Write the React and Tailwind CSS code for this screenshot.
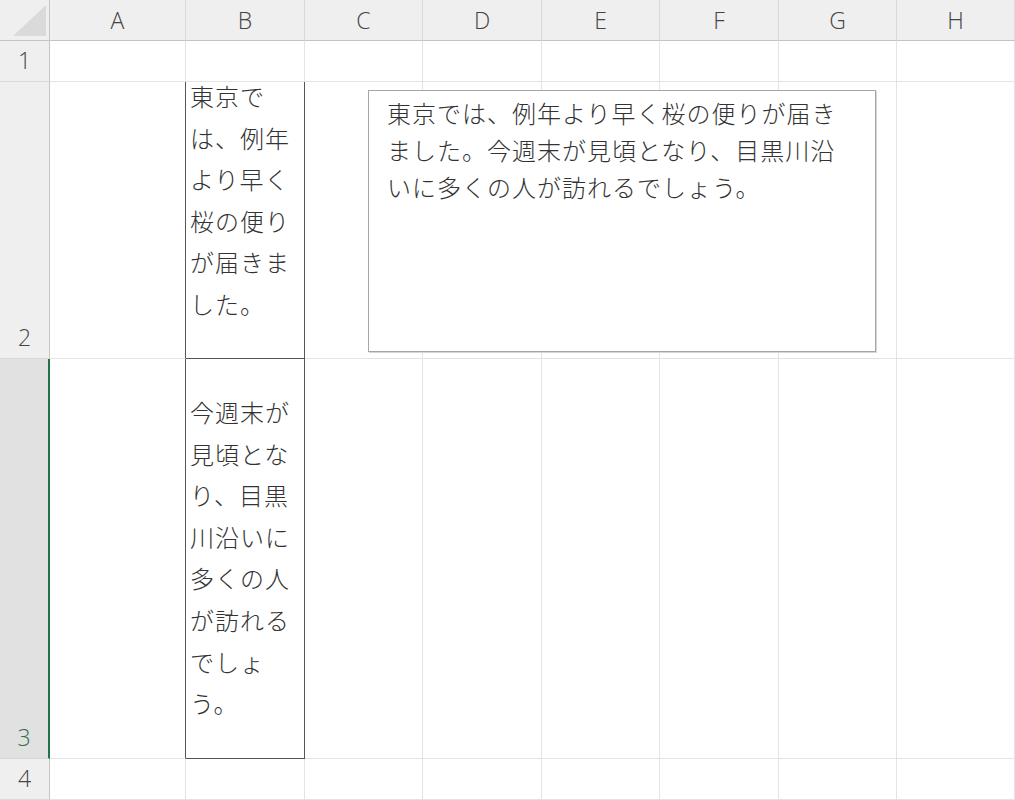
import React from "react";

const cols = ["A", "B", "C", "D", "E", "F", "G", "H"];
const jp = { fontFamily: '"Noto Sans CJK JP", "Noto Sans", sans-serif' };
const head = { fontFamily: '"Open Sans", "Liberation Sans", sans-serif' };

const b2 = ["東京で", "は、例年", "より早く", "桜の便り", "が届きま", "した。"];
const b3 = ["今週末が", "見頃とな", "り、目黒", "川沿いに", "多くの人", "が訪れる", "でしょ", "う。"];
const box = [
    "東京では、例年より早く桜の便りが届き",
    "ました。今週末が見頃となり、目黒川沿",
    "いに多くの人が訪れるでしょう。",
];

const RowHead = ({ n, selected }) => (
    <div
        className={
            "flex items-end justify-center border-b font-light " +
            (selected
                ? "bg-[#e1e1e1] border-r-2 border-r-[#217346] border-b-[#d4d4d4] text-[#2f6f4c]"
                : "bg-[#efefef] border-r border-r-[#c4c4c4] border-b-[#d9d9d9] text-[#444]")
        }
        style={head}
    >
        <div className="h-[41px] flex items-center text-[23px]">{n}</div>
    </div>
);

const Cell = ({ children, className = "" }) => (
    <div className={"border-r border-b border-[#e3e3e3] relative " + className}>{children}</div>
);

export default function App() {
    return (
        <div className="relative w-[1015px] h-[800px] overflow-hidden bg-white">
            <div className="grid grid-cols-[50px_136px_119px_118px_119px_118px_119px_118px_118px] grid-rows-[41px_41px_277px_400px_41px]">
                {/* corner */}
                <div className="bg-[#efefef] border-r border-b border-[#c4c4c4] relative">
                    <svg className="absolute left-0 top-0" width="50" height="41">
                        <polygon points="13,36 46,36 46,5" fill="#dadada" />
                    </svg>
                </div>
                {cols.map((c) => (
                    <div
                        key={c}
                        className="bg-[#efefef] border-r border-r-[#dadada] border-b border-b-[#c4c4c4] flex items-center justify-center text-[23px] font-light text-[#444]"
                        style={head}
                    >
                        {c}
                    </div>
                ))}

                {/* row 1 */}
                <RowHead n="1" />
                {cols.map((c) => (
                    <Cell key={"1" + c} />
                ))}

                {/* row 2 */}
                <RowHead n="2" />
                <Cell className="border-r-[#555]" />
                <div className="border-r border-b border-[#555] relative text-[24px] tracking-[1px] font-light text-[#333]" style={jp}>
                    <div className="absolute left-[4px] top-[-7px] leading-[41.5px] whitespace-nowrap">
                        {b2.map((l, i) => (
                            <div key={i}>{l}</div>
                        ))}
                    </div>
                </div>
                {cols.slice(2).map((c) => (
                    <Cell key={"2" + c} />
                ))}

                {/* row 3 */}
                <RowHead n="3" selected />
                <Cell className="border-r-[#555]" />
                <div className="border-r border-b border-[#555] relative text-[24px] tracking-[1px] font-light text-[#333]" style={jp}>
                    <div className="absolute left-[4px] top-[32px] leading-[41.6px] whitespace-nowrap">
                        {b3.map((l, i) => (
                            <div key={i}>{l}</div>
                        ))}
                    </div>
                </div>
                {cols.slice(2).map((c) => (
                    <Cell key={"3" + c} />
                ))}

                {/* row 4 */}
                <RowHead n="4" />
                {cols.map((c) => (
                    <Cell key={"4" + c} />
                ))}
            </div>

            {/* text box */}
            <div
                className="absolute left-[368px] top-[90px] w-[508px] h-[262px] bg-white border border-[#a6a6a6] shadow-[1px_1px_0_#d6d6d6] text-[24px] tracking-[1px] font-light text-[#333]"
                style={jp}
            >
                <div className="pl-[18px] pt-[3px] leading-[37px] whitespace-nowrap">
                    {box.map((l, i) => (
                        <div key={i}>{l}</div>
                    ))}
                </div>
            </div>
        </div>
    );
}
